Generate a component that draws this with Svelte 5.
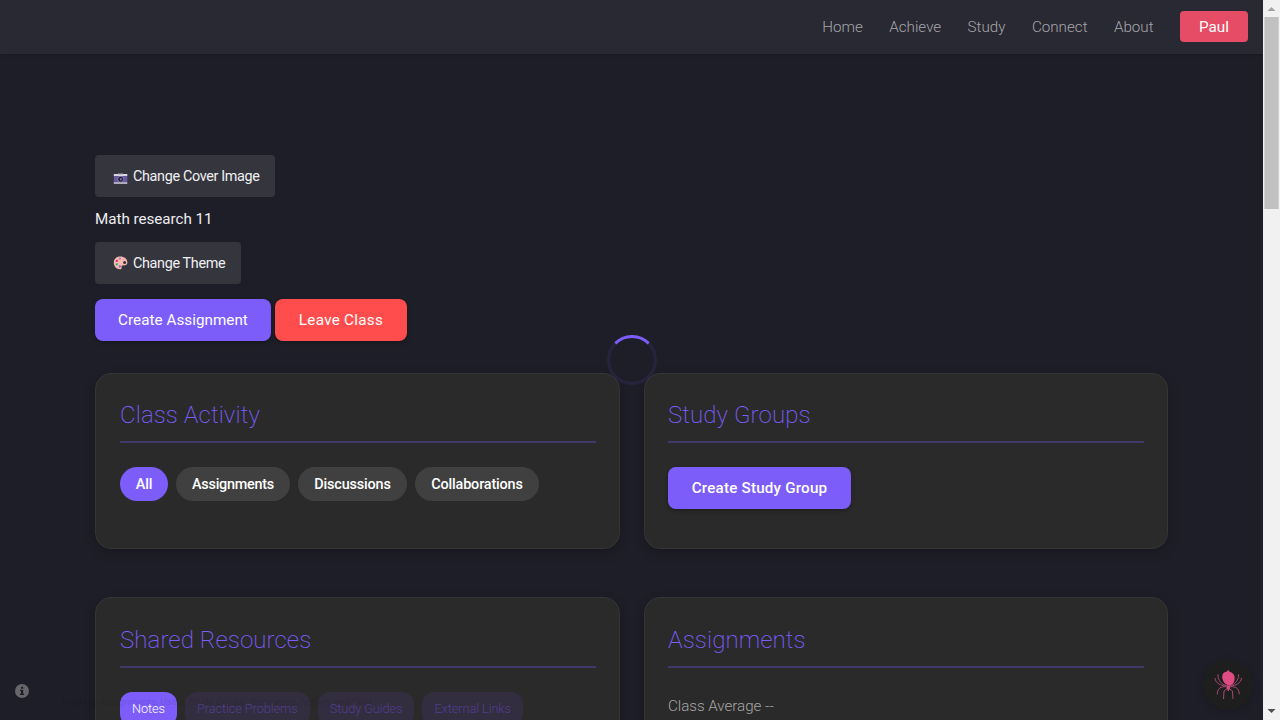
<script>
  const links = ['Home', 'Achieve', 'Study', 'Connect', 'About'];
  const filters = ['All', 'Assignments', 'Discussions', 'Collaborations'];
  const tabs = ['Notes', 'Practice Problems', 'Study Guides', 'External Links'];
</script>

<div class="window">
  <div class="page">
    <header>
      <nav>
        {#each links as link}<span class="link">{link}</span>{/each}
      </nav>
      <button class="user">Paul</button>
    </header>

    <main>
      <button class="subtle cover">
        <svg class="emoji" viewBox="0 0 15 14" width="15" height="14">
          <path d="M.8 3h13.500v2H.8z" fill="#d9d5e2" />
          <path d="M5 2.500h5v1H5z" fill="#aaa3bd" />
          <path d="M.8 5h13.500v6.600H.8z" fill="#6858a0" />
          <path d="M.8 11.400h13.500v1.300H.8z" fill="#e7e3ed" />
          <circle cx="7.600" cy="8.300" r="3" fill="#9b8fba" />
          <circle cx="7.600" cy="8.300" r="2.500" fill="#282238" />
          <circle cx="7.800" cy="8.200" r="1" fill="#8e80b8" />
        </svg>
        <span>Change Cover Image</span>
      </button>
      <p class="classname">Math research 11</p>
      <button class="subtle theme">
        <svg class="emoji" viewBox="0 0 15 14" width="15" height="14">
          <path d="M7.300.4C3.200.4.8 3.100.8 6.600c0 3.700 2.600 6.700 6 6.700 1.600 0 2-.8 1.800-1.900-.2-1.200.2-2.100 1.500-2.100 1.800.3 4.300-.2 4.300-2.900C14.400 2.700 11 .4 7.300.4z" fill="#fbb8ad" />
          <circle cx="11.600" cy="6.500" r="1.500" fill="#35343d" />
          <circle cx="6.900" cy="2.600" r="1.100" fill="#9580d5" />
          <circle cx="3.800" cy="4.900" r="1.150" fill="#e3267e" />
          <circle cx="3.800" cy="8.300" r="1.150" fill="#19b46e" />
          <circle cx="6.800" cy="10.500" r="1.150" fill="#766bdf" />
          <circle cx="10.200" cy="3.600" r=".7" fill="#df9292" />
        </svg>
        <span>Change Theme</span>
      </button>
      <div class="actions">
        <button class="solid create">Create Assignment</button>
        <button class="solid danger">Leave Class</button>
      </div>

      <div class="grid">
        <section>
          <h2>Class Activity</h2>
          <div class="pills">
            {#each filters as filter, i}
              <button class="pill" class:active={i === 0}>{filter}</button>
            {/each}
          </div>
        </section>
        <section>
          <h2>Study Groups</h2>
          <button class="solid group">Create Study Group</button>
        </section>
        <section class="tall">
          <h2>Shared Resources</h2>
          <div class="tabs">
            {#each tabs as tab, i}
              <button class="tab" class:active={i === 0}>{tab}</button>
            {/each}
          </div>
        </section>
        <section class="tall">
          <h2>Assignments</h2>
          <p class="average">Class Average --</p>
        </section>
      </div>
    </main>

    <svg class="spinner" viewBox="0 0 50 50" width="50" height="50" fill="none" stroke-width="3">
      <circle cx="25" cy="25" r="23.500" stroke="#7c5dfa" stroke-opacity=".1" />
      <path d="M8.380 8.380a23.500 23.500 0 0 1 33.240 0" stroke="#7c5dfa" />
    </svg>

    <svg class="info" viewBox="0 0 14 14" width="14" height="14">
      <circle cx="7" cy="7" r="7" fill="#66666a" />
      <path d="M6 2.700h2.200v2H6zM5 5.700h3.200v4H9v1.400H5V9.700h1V7.100H5z" fill="#1f1f28" />
    </svg>

    <div class="status">Fetching Assignments, Users, Study Groups, Resources, Activity and Chat</div>

    <div class="spider">
      <svg viewBox="0 0 30 32" width="30" height="32" fill="none" stroke="#a84a70" stroke-width="1">
        <path d="M13.500 16.700C9 15.500 4.500 11.500 5 5.300M13 17.200C8 16.500 2.500 14.500 2 9M13 17.700C8 17.500 4.300 19 4.300 25.300M14.500 19.500l-3.500 2.500-.5 8M17 16.700c4.500-1.200 9-5.200 8.500-11.400M17.500 17.200c5-.7 10.500-2.700 11-8.200M17.500 17.700c5-.2 8.700 1.300 8.700 7.600M16 19.500l3.500 2.500.5 8" />
        <path d="M15.200.8l1.300 1.900c3.200.8 5.200 3 5.200 6.300 0 3.900-1.900 6.300-3.700 7h-3.300C11.800 15.200 9.200 11.500 9.200 7.500c0-2.700 2-4.500 4.800-4.900z" fill="#df4c82" stroke="none" />
        <path d="M13.200 16.300h4.200l-.4 3-1 2-.7 1-.7-1-1-2z" fill="#cf4b7c" stroke="none" />
      </svg>
    </div>
  </div>

  <div class="scrollbar">
    <svg viewBox="0 0 17 17" width="17" height="17"><path d="M4.500 11l4-4 4 4z" fill="#a3a3a3" /></svg>
    <div class="thumb"></div>
    <svg class="down" viewBox="0 0 17 17" width="17" height="17"><path d="M4.500 6h8l-4 4z" fill="#505050" /></svg>
  </div>
</div>

<style>
  :global(body) { margin: 0; background: #1e1e28; }
  * { box-sizing: border-box; }
  .window { width: 1280px; height: 720px; display: flex; overflow: hidden; font-family: Roboto, sans-serif; font-size: 16px; }
  .page { width: 1263px; height: 720px; position: relative; overflow: hidden; background: #1e1e28; }
  header { height: 54px; background: #292933; display: flex; justify-content: flex-end; align-items: center; padding: 0 15px 1px 0; box-shadow: 0 1px 3px rgba(0, 0, 0, .2); }
  nav { display: flex; gap: 26.4px; margin-right: 26.4px; }
  .link { font-size: 15.2px; font-weight: 300; color: #a6a6aa; }
  button { border: 0; margin: 0; padding: 0; color: #fff; font-family: inherit; white-space: nowrap; }
  .user { width: 68px; height: 31px; border-radius: 4px; background: #e64c65; font-size: 15.2px; letter-spacing: .1px; }
  main { padding: 101px 95px 0; }
  .subtle { display: flex; align-items: center; height: 42px; border-radius: 4px; background: #35353e; color: #f0f0f2; font-size: 14.4px; letter-spacing: -.35px; padding: 0 0 0 18px; }
  .emoji { flex: none; margin-right: 5px; }
  .cover { width: 180px; }
  .cover .emoji { margin-top: 3px; }
  .theme { width: 146px; }
  .classname { margin: 0; height: 45px; line-height: 44px; color: #ededf0; font-size: 15.2px; font-weight: 400; letter-spacing: -.03px; }
  .actions { display: flex; gap: 4px; margin-top: 15px; }
  .solid { height: 42px; border-radius: 8px; padding-bottom: 1px; background: #7c5dfa; font-size: 15.2px; font-weight: 500; box-shadow: 0 2px 4px rgba(0, 0, 0, .25); }
  .create { width: 176px; font-weight: 450; letter-spacing: .05px; }
  .danger { width: 132px; background: #ff4d4d; font-weight: 450; letter-spacing: .3px; }
  .group { width: 183px; letter-spacing: .2px; }
  .grid { display: grid; grid-template-columns: 525px 524px; column-gap: 24px; row-gap: 48px; margin-top: 32px; }
  section { height: 176px; padding: 24px 23px 24px 24px; border: 1px solid #353536; border-radius: 16px; background: #2a2a2a; box-shadow: 0 4px 12px rgba(0, 0, 0, .2); }
  section:nth-child(even) { padding-left: 23px; }
  .tall { height: 300px; }
  h2 { margin: 0 0 24px; height: 45px; border-bottom: 2px solid #42386a; line-height: 35px; font-size: 24px; font-weight: 200; color: #7c5dfa; letter-spacing: .1px; }
  .tall h2 { height: 46px; line-height: 36px; }
  .pills, .tabs { display: flex; gap: 8px; }
  .pill { height: 34px; border-radius: 17px; padding: 0; background: #404040; font-size: 14.4px; font-weight: 500; letter-spacing: -.15px; }
  .pill:nth-child(1) { width: 48px; }
  .pill:nth-child(2) { width: 114px; letter-spacing: -.25px; }
  .pill:nth-child(3) { width: 109px; }
  .pill:nth-child(4) { width: 124px; }
  .pill.active, .tab.active { background: #7c5dfa; color: #fff; }
  .tab { height: 34px; border-radius: 12px; padding: 0 12px 1px; background: #332d40; color: #4f3f8e; font-size: 12.8px; font-weight: 300; letter-spacing: -.1px; }
  .average { margin: 0; line-height: 28px; font-size: 15.2px; font-weight: 300; color: #a6a6a6; letter-spacing: -.04px; }
  .spinner { position: absolute; left: 607px; top: 335px; }
  .info { position: absolute; left: 15px; top: 684px; }
  .status { position: absolute; left: 61px; top: 696px; font-size: 9.600px; line-height: 12px; color: #000; opacity: .09; white-space: nowrap; }
  .spider { position: absolute; left: 1203px; top: 660px; width: 50px; height: 50px; border-radius: 50%; background: #1e1e1e; display: flex; justify-content: center; padding-top: 9px; box-shadow: 0 2px 8px rgba(0, 0, 0, .15); }
  .scrollbar { width: 17px; height: 720px; background: #f1f1f1; display: flex; flex-direction: column; align-items: center; }
  .scrollbar svg { display: block; flex: none; }
  .thumb { width: 15px; height: 192px; background: #c1c1c1; border-right: 1px solid #d3d3d3; border-left: 1px solid #d3d3d3; }
  .down { margin-top: auto; }
</style>
